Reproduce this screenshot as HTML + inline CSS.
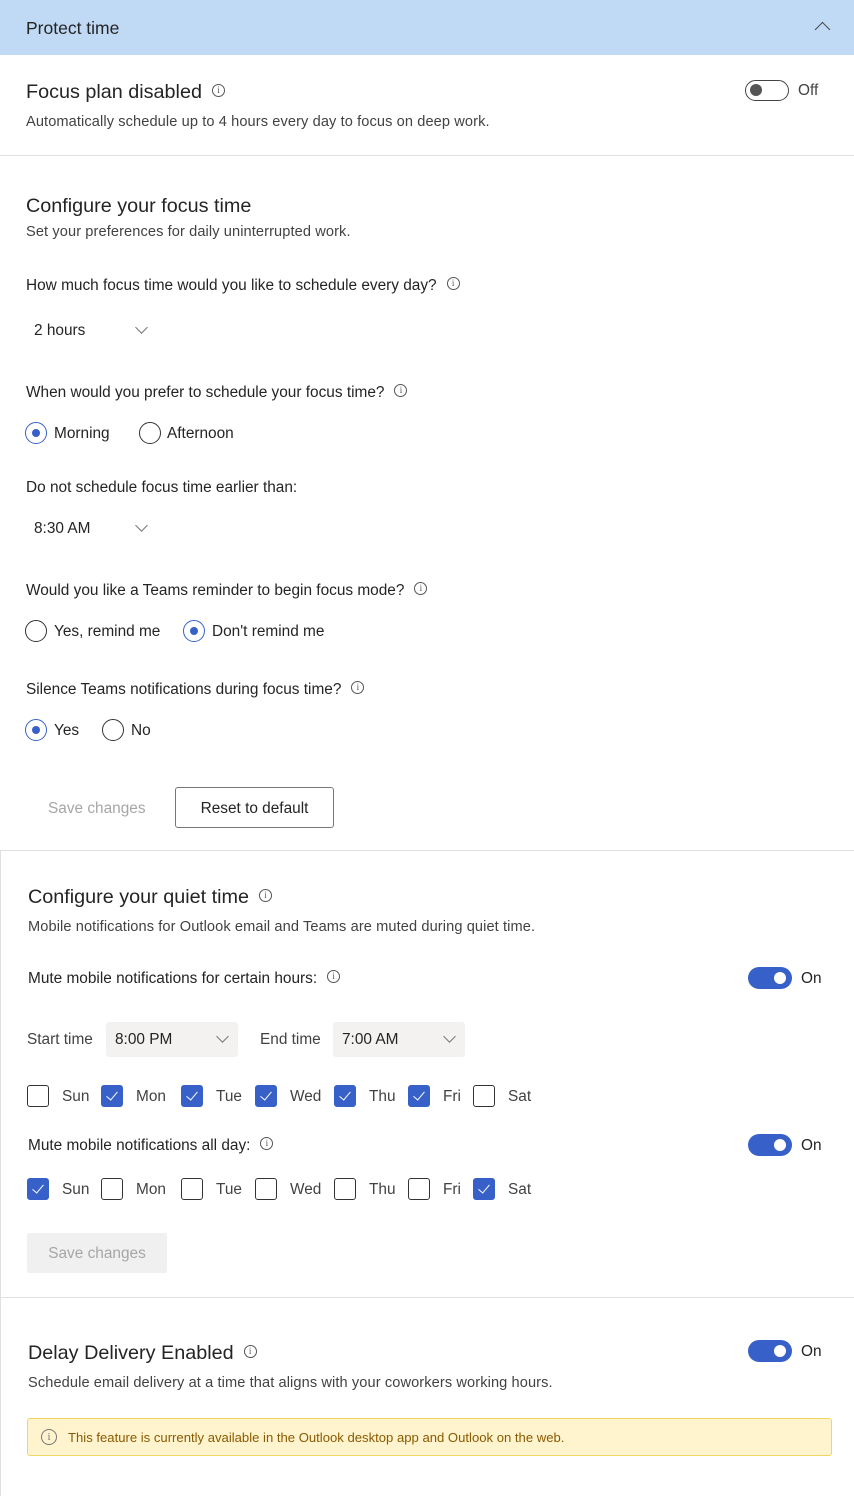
<!DOCTYPE html>
<html><head><meta charset="utf-8"><style>
*{box-sizing:border-box;margin:0;padding:0}
body{width:854px;height:1496px;background:#fff;font-family:"Liberation Sans",sans-serif;color:#242424;position:relative;overflow:hidden}
.a{position:absolute;white-space:nowrap;line-height:20px}
.h{font-size:19.8px}
.d{font-size:14.6px;color:#424242;letter-spacing:0.1px}
.l{font-size:15.4px}
.info{display:inline-block;position:relative;top:-2px;vertical-align:middle;margin-left:10px;width:13px;height:13px;border:1px solid #555;border-radius:50%;font-size:9px;line-height:11px;text-align:center;color:#555;font-family:"Liberation Serif",serif;letter-spacing:0}
.rad{position:absolute;width:22px;height:22px;border:1.5px solid #333;border-radius:50%}
.rad.on{border-color:#3761c8}
.rad.on::after{content:"";position:absolute;left:5.5px;top:5.5px;width:8px;height:8px;border-radius:50%;background:#3761c8}
.cb{position:absolute;width:22px;height:22px;border:1.5px solid #333;border-radius:3px}
.cb.on{background:#3761c8;border-color:#3761c8}
.cb.on::after{content:"";position:absolute;left:6.5px;top:2.5px;width:5px;height:10px;border:solid #fff;border-width:0 1.5px 1.5px 0;transform:rotate(40deg)}
.tg{position:absolute;width:44px;height:22px;border-radius:11px;background:#3761c8}
.tg::after{content:"";position:absolute;right:6px;top:5px;width:12px;height:12px;border-radius:50%;background:#fff}
.chev{position:absolute;width:9px;height:9px;border:solid #777;border-width:0 1px 1px 0;transform:rotate(45deg)}
.hr{position:absolute;left:0;width:854px;height:1px;background:#e0e0e0}
.g{color:#424242}
</style></head><body>
<div style="position:absolute;left:0;top:0;width:854px;height:55px;background:#c0d9f5"></div>
<div class="a" style="left:26px;top:18px;font-size:17.5px">Protect time</div>
<div style="position:absolute;left:817px;top:24px;width:11px;height:11px;border:solid #444;border-width:1px 0 0 1px;transform:rotate(45deg)"></div>

<div class="a h" style="left:26px;top:82px">Focus plan disabled<span class="info">i</span></div>
<div style="position:absolute;left:745px;top:80px;width:44px;height:21px;border:1.5px solid #444;border-radius:11px"><div style="position:absolute;left:4px;top:3px;width:12px;height:12px;border-radius:50%;background:#555"></div></div>
<div class="a l g" style="left:798px;top:81px">Off</div>
<div class="a d" style="left:26px;top:112px">Automatically schedule up to 4 hours every day to focus on deep work.</div>
<div class="hr" style="top:155px"></div>

<div class="a h" style="left:26px;top:196px">Configure your focus time</div>
<div class="a d" style="left:26px;top:222px">Set your preferences for daily uninterrupted work.</div>
<div class="a l" style="left:26px;top:276px">How much focus time would you like to schedule every day?<span class="info">i</span></div>
<div class="a l" style="left:34px;top:321px">2 hours</div>
<div class="chev" style="left:137px;top:323px"></div>
<div class="a l" style="left:26px;top:383px">When would you prefer to schedule your focus time?<span class="info">i</span></div>
<div class="rad on" style="left:25px;top:422px"></div><div class="a l" style="left:54px;top:424px">Morning</div>
<div class="rad" style="left:139px;top:422px"></div><div class="a l" style="left:167px;top:424px">Afternoon</div>
<div class="a l" style="left:26px;top:478px">Do not schedule focus time earlier than:</div>
<div class="a l" style="left:34px;top:519px">8:30 AM</div>
<div class="chev" style="left:137px;top:521px"></div>
<div class="a l" style="left:26px;top:581px">Would you like a Teams reminder to begin focus mode?<span class="info">i</span></div>
<div class="rad" style="left:25px;top:620px"></div><div class="a l" style="left:54px;top:622px">Yes, remind me</div>
<div class="rad on" style="left:183px;top:620px"></div><div class="a l" style="left:212px;top:622px">Don't remind me</div>
<div class="a l" style="left:26px;top:680px">Silence Teams notifications during focus time?<span class="info">i</span></div>
<div class="rad on" style="left:25px;top:719px"></div><div class="a l" style="left:54px;top:721px">Yes</div>
<div class="rad" style="left:102px;top:719px"></div><div class="a l" style="left:131px;top:721px">No</div>
<div class="a l" style="left:48px;top:799px;color:#a6a6a6">Save changes</div>
<div style="position:absolute;left:175px;top:787px;width:159px;height:41px;border:1px solid #777;border-radius:3px;font-size:15.4px;line-height:41px;text-align:center">Reset to default</div>
<div class="hr" style="top:850px"></div>
<div style="position:absolute;left:0;top:850px;width:1px;height:646px;background:#e0e0e0"></div>

<div class="a h" style="left:28px;top:887px">Configure your quiet time<span class="info">i</span></div>
<div class="a d" style="left:28px;top:917px">Mobile notifications for Outlook email and Teams are muted during quiet time.</div>
<div class="a l" style="left:28px;top:969px">Mute mobile notifications for certain hours:<span class="info">i</span></div>
<div class="tg" style="left:748px;top:967px"></div><div class="a l" style="left:801px;top:969px">On</div>
<div class="a l g" style="left:27px;top:1030px">Start time</div>
<div style="position:absolute;left:106px;top:1022px;width:132px;height:35px;background:#f3f2f1;border-radius:3px"></div>
<div class="a l" style="left:115px;top:1030px">8:00 PM</div>
<div class="chev" style="left:218px;top:1032px"></div>
<div class="a l g" style="left:260px;top:1030px">End time</div>
<div style="position:absolute;left:333px;top:1022px;width:132px;height:35px;background:#f3f2f1;border-radius:3px"></div>
<div class="a l" style="left:342px;top:1030px">7:00 AM</div>
<div class="chev" style="left:445px;top:1032px"></div>

<div class="cb" style="left:27px;top:1085px"></div><div class="a l g" style="left:62px;top:1087px">Sun</div>
<div class="cb on" style="left:101px;top:1085px"></div><div class="a l g" style="left:136px;top:1087px">Mon</div>
<div class="cb on" style="left:181px;top:1085px"></div><div class="a l g" style="left:216px;top:1087px">Tue</div>
<div class="cb on" style="left:255px;top:1085px"></div><div class="a l g" style="left:290px;top:1087px">Wed</div>
<div class="cb on" style="left:334px;top:1085px"></div><div class="a l g" style="left:369px;top:1087px">Thu</div>
<div class="cb on" style="left:408px;top:1085px"></div><div class="a l g" style="left:443px;top:1087px">Fri</div>
<div class="cb" style="left:473px;top:1085px"></div><div class="a l g" style="left:508px;top:1087px">Sat</div>

<div class="a l" style="left:28px;top:1136px">Mute mobile notifications all day:<span class="info">i</span></div>
<div class="tg" style="left:748px;top:1134px"></div><div class="a l" style="left:801px;top:1136px">On</div>

<div class="cb on" style="left:27px;top:1178px"></div><div class="a l g" style="left:62px;top:1180px">Sun</div>
<div class="cb" style="left:101px;top:1178px"></div><div class="a l g" style="left:136px;top:1180px">Mon</div>
<div class="cb" style="left:181px;top:1178px"></div><div class="a l g" style="left:216px;top:1180px">Tue</div>
<div class="cb" style="left:255px;top:1178px"></div><div class="a l g" style="left:290px;top:1180px">Wed</div>
<div class="cb" style="left:334px;top:1178px"></div><div class="a l g" style="left:369px;top:1180px">Thu</div>
<div class="cb" style="left:408px;top:1178px"></div><div class="a l g" style="left:443px;top:1180px">Fri</div>
<div class="cb on" style="left:473px;top:1178px"></div><div class="a l g" style="left:508px;top:1180px">Sat</div>

<div style="position:absolute;left:27px;top:1233px;width:140px;height:40px;background:#f0f0f0;border-radius:2px;color:#a6a6a6;font-size:15.4px;line-height:42px;text-align:center">Save changes</div>
<div class="hr" style="top:1297px"></div>

<div class="a h" style="left:28px;top:1343px">Delay Delivery Enabled<span class="info">i</span></div>
<div class="tg" style="left:748px;top:1340px"></div><div class="a l" style="left:801px;top:1342px">On</div>
<div class="a d" style="left:28px;top:1373px">Schedule email delivery at a time that aligns with your coworkers working hours.</div>
<div style="position:absolute;left:27px;top:1418px;width:805px;height:38px;background:#fff4ce;border:1px solid #f2d661;border-radius:3px"></div>
<div style="position:absolute;left:41px;top:1429px;width:16px;height:16px;border:1px solid #777;border-radius:50%;line-height:14px;font-size:11px;color:#777;text-align:center;font-family:'Liberation Serif',serif">i</div>
<div class="a" style="left:68px;top:1428px;font-size:13.1px;color:#8a5a00">This feature is currently available in the Outlook desktop app and Outlook on the web.</div>
</body></html>
